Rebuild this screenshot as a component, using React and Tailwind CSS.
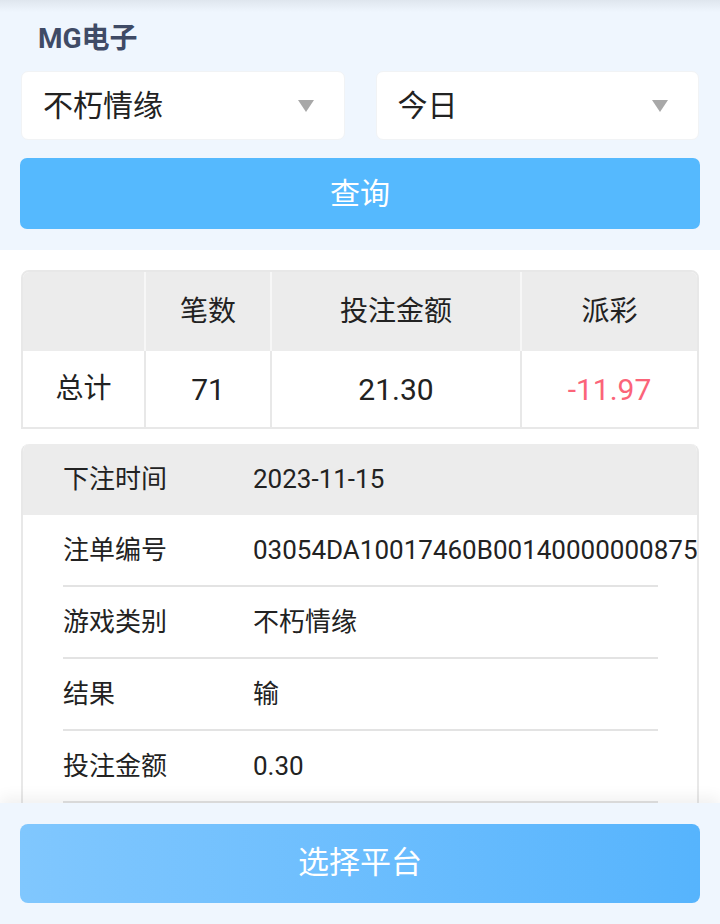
import React from "react";

const FONT = { fontFamily: 'Roboto, "Noto Sans CJK SC", "Noto Sans", sans-serif' };

function Select({ label }) {
  return (
    <div className="flex-1 h-[69px] bg-white rounded-[7px] border border-[#f1f3f5] flex items-center justify-between pl-[21px] pr-[30px]">
      <span className="text-[30px] text-[#222]">{label}</span>
      <svg width="16" height="12" viewBox="0 0 16 12">
        <polygon points="0,0 16,0 8,12" fill="#a8a8a8" />
      </svg>
    </div>
  );
}

const rows = [
  ["注单编号", "03054DA10017460B00140000000875"],
  ["游戏类别", "不朽情缘"],
  ["结果", "输"],
  ["投注金额", "0.30"],
];

export default function App() {
  return (
    <div style={FONT} className="w-[720px] min-h-[924px] bg-white relative overflow-hidden">
      <div className="bg-[#eff6fe] relative">
        <div className="absolute top-0 left-0 right-0 h-[12px] bg-gradient-to-b from-[#dfe6ee] to-transparent" />
        <div className="pt-[22px] pl-[38px] h-[71px]">
          <span className="text-[28px] font-bold text-[#3f4b66] leading-[34px]">MG电子</span>
        </div>
        <div className="px-[21px] flex gap-[31px]">
          <Select label="不朽情缘" />
          <Select label="今日" />
        </div>
        <div className="px-[20px] pt-[18px] pb-[21px]">
          <div className="h-[71px] rounded-[7px] bg-[#55b9fe] flex items-center justify-center text-white text-[30px]">
            查询
          </div>
        </div>
      </div>

      <div className="px-[21px] pt-[20px]">
        <div className="border-2 border-[#e8e8e8] rounded-t-[8px] overflow-hidden">
          <div className="grid grid-cols-[123px_126px_250px_1fr] bg-[#ececec] h-[79px] text-[28px] text-[#222]">
            <div className="border-r-2 border-[#f7f7f7]" />
            <div className="border-r-2 border-[#f7f7f7] flex items-center justify-center">笔数</div>
            <div className="border-r-2 border-[#f7f7f7] flex items-center justify-center">投注金额</div>
            <div className="flex items-center justify-center">派彩</div>
          </div>
          <div className="grid grid-cols-[123px_126px_250px_1fr] bg-white h-[76px] text-[28px] text-[#222]">
            <div className="border-r-2 border-[#e8e8e8] flex items-center justify-center">总计</div>
            <div className="border-r-2 border-[#e8e8e8] flex items-center justify-center text-[30px]">71</div>
            <div className="border-r-2 border-[#e8e8e8] flex items-center justify-center text-[30px]">21.30</div>
            <div className="flex items-center justify-center text-[30px] text-[#fb6479]">-11.97</div>
          </div>
        </div>

        <div className="mt-[15px] border-x-2 border-t-0 border-[#e8e8e8] rounded-t-[8px] overflow-hidden">
          <div className="bg-[#ececec] h-[71px] flex items-center text-[26px] text-[#222]">
            <span className="w-[230px] shrink-0 pl-[40px]">下注时间</span>
            <span>2023-11-15</span>
          </div>
          <div className="pl-[40px] pr-[39px]">
            {rows.map(([k, v]) => (
              <div key={k} className="h-[72px] border-b-2 border-[#e3e3e3] flex items-center text-[26px] text-[#222] whitespace-nowrap">
                <span className="w-[190px] shrink-0">{k}</span>
                <span>{v}</span>
              </div>
            ))}
          </div>
          <div className="h-[140px]" />
        </div>
      </div>

      <div className="fixed left-0 right-0 bottom-0 h-[121px] bg-[#eff6fe] shadow-[0_-6px_14px_rgba(0,0,0,0.06)] px-[20px] pt-[21px]">
        <div className="h-[79px] rounded-[8px] bg-gradient-to-r from-[#80c7fe] to-[#56b4fd] flex items-center justify-center text-white text-[31px]">
          选择平台
        </div>
      </div>
    </div>
  );
}
